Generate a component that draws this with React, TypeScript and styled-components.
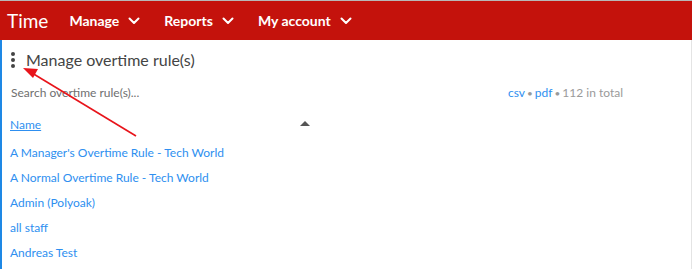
import React from 'react';
import styled, { createGlobalStyle } from 'styled-components';

const GlobalStyle = createGlobalStyle`
  html, body {
    margin: 0;
    padding: 0;
    background: #fff;
    font-family: Lato, 'Liberation Sans', sans-serif;
  }
`;

const rules = [
  "A Manager's Overtime Rule - Tech World",
  'A Normal Overtime Rule - Tech World',
  'Admin (Polyoak)',
  'all staff',
  'Andreas Test',
];

const Chevron = () => (
  <svg width="12" height="8" viewBox="0 0 12 8">
    <path d="M1.5 1.5 L6 6 L10.5 1.5" fill="none" stroke="#fff" strokeWidth="2" strokeLinecap="round" strokeLinejoin="round" />
  </svg>
);

const App = () => {
  return (
    <Page>
      <GlobalStyle />
      <TopBar>
        <Brand>Time</Brand>
        <Menu>
          {['Manage', 'Reports', 'My account'].map((m) => (
            <MenuItem key={m}>
              {m}
              <Chevron />
            </MenuItem>
          ))}
        </Menu>
      </TopBar>
      <Body>
        <TitleRow>
          <Kebab>
            <span />
            <span />
            <span />
          </Kebab>
          <Title>Manage overtime rule(s)</Title>
        </TitleRow>
        <ToolRow>
          <Search placeholder="Search overtime rule(s)..." />
          <Exports>
            <a>csv</a>
            <Dot>•</Dot>
            <a>pdf</a>
            <Dot>•</Dot>
            <span>112 in total</span>
          </Exports>
        </ToolRow>
        <HeaderRow>
          <SortLink>Name</SortLink>
          <SortArrow />
        </HeaderRow>
        <List>
          {rules.map((r) => (
            <Item key={r}>{r}</Item>
          ))}
        </List>
        <Annotation width="140" height="80" viewBox="0 0 140 80">
          <line x1="134" y1="76" x2="30" y2="13" stroke="#e8141b" strokeWidth="1.6" />
          <polygon points="21,8 36,9 31,18" fill="#e8141b" />
        </Annotation>
      </Body>
    </Page>
  );
};

const Page = styled.div`
  width: 692px;
  height: 269px;
  overflow: hidden;
  border-top: 1px solid #b8b8b8;
  box-sizing: border-box;
`;

const TopBar = styled.div`
  height: 39px;
  background: #c4120c;
  display: flex;
  align-items: center;
  padding-left: 7px;
  color: #fff;
`;

const Brand = styled.div`
  font-size: 19px;
  margin-right: 21px;
  padding-bottom: 1px;
`;

const Menu = styled.div`
  display: flex;
  gap: 24px;
`;

const MenuItem = styled.div`
  display: flex;
  align-items: center;
  gap: 9px;
  font-size: 14px;
  font-weight: 700;

  & svg {
    margin-top: 1px;
  }
`;

const Body = styled.div`
  position: relative;
  height: 229px;
  border-left: 2px solid #1e88e5;
  border-right: 1px solid #e4e4e4;
  padding: 0 0 0 8px;
`;

const TitleRow = styled.div`
  display: flex;
  align-items: center;
  height: 38px;
`;

const Kebab = styled.div`
  display: flex;
  flex-direction: column;
  gap: 2px;
  width: 4px;
  margin: 1px 11px 0 1px;

  & span {
    width: 4px;
    height: 4px;
    border-radius: 50%;
    background: #444;
  }
`;

const Title = styled.div`
  font-size: 16px;
  color: #444;
`;

const ToolRow = styled.div`
  display: flex;
  align-items: center;
  height: 27px;
  margin-top: 1px;
`;

const Search = styled.input`
  border: none;
  outline: none;
  font-family: inherit;
  font-size: 12px;
  padding: 0 0 0 1px;
  width: 300px;
  color: #444;
  &::placeholder {
    color: #6f6f6f;
  }
`;

const Exports = styled.div`
  margin-left: 197px;
  font-size: 12px;
  color: #9a9a9a;
  display: flex;
  align-items: center;

  & a {
    color: #2e8ff0;
  }
`;

const Dot = styled.span`
  color: #999;
  margin: 0 2px;
  font-size: 10px;
`;

const HeaderRow = styled.div`
  display: flex;
  align-items: center;
  height: 31px;
  margin-top: 3px;
`;

const SortLink = styled.a`
  font-size: 12px;
  color: #2e8ff0;
  text-decoration: underline;
  width: 290px;
`;

const SortArrow = styled.span`
  width: 0;
  height: 0;
  border-left: 5px solid transparent;
  border-right: 5px solid transparent;
  border-bottom: 5px solid #555;
  margin-top: -3px;
`;

const List = styled.div`
  display: flex;
  flex-direction: column;
`;

const Item = styled.a`
  font-size: 12px;
  color: #2e8ff0;
  height: 25px;
  line-height: 25px;
`;

const Annotation = styled.svg`
  position: absolute;
  left: 0px;
  top: 20px;
  pointer-events: none;
`;

export default App;
